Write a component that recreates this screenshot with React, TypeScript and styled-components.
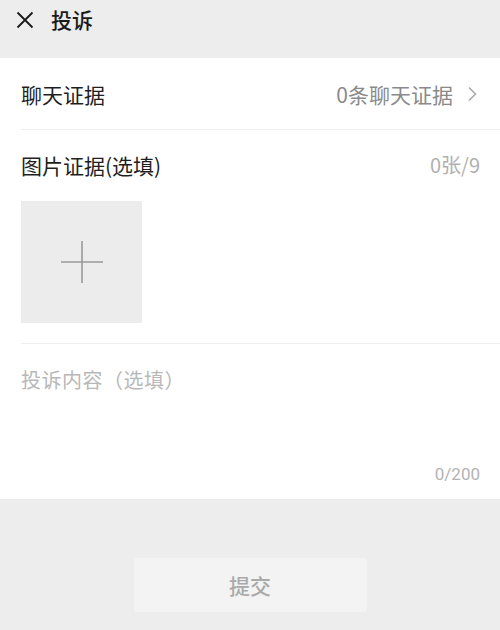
import React from "react";
import styled, { createGlobalStyle } from "styled-components";

const Global = createGlobalStyle`
  html, body { margin: 0; padding: 0; background: #ededed; }
  body { font-family: "Noto Sans CJK SC", "Noto Sans", sans-serif; }
  * { box-sizing: border-box; }
`;

const Page = styled.div`
  width: 500px;
  height: 630px;
  background: #ededed;
  display: flex;
  flex-direction: column;
`;

const Header = styled.div`
  height: 58px;
  display: flex;
  align-items: flex-start;
  padding: 9px 0 0 16px;
  gap: 17px;
`;

const Title = styled.div`
  font-size: 21px;
  font-weight: 500;
  color: #1a1a1a;
  line-height: 21px;
`;

const Panel = styled.div`
  background: #fff;
  display: flex;
  flex-direction: column;
  padding-left: 21px;
`;

const Row = styled.div<{ $h: number }>`
  height: ${(p) => p.$h}px;
  display: flex;
  align-items: center;
  justify-content: space-between;
  padding-right: 22px;
  border-bottom: 1px solid #efefef;
`;

const Label = styled.div`
  font-size: 21px;
  color: #1f1f1f;
`;

const Meta = styled.div<{ $color: string; $size: number }>`
  font-size: ${(p) => p.$size}px;
  color: ${(p) => p.$color};
  display: flex;
  align-items: center;
  gap: 14px;
`;

const PhotoBlock = styled.div`
  display: flex;
  flex-direction: column;
  border-bottom: 1px solid #efefef;
  padding-bottom: 20px;
`;

const PhotoHead = styled.div`
  height: 71px;
  display: flex;
  align-items: center;
  justify-content: space-between;
  padding-right: 20px;
  padding-bottom: 2px;
`;

const AddBox = styled.div`
  width: 121px;
  height: 122px;
  background: #ececec;
  display: flex;
  align-items: center;
  justify-content: center;
`;

const ContentBlock = styled.div`
  height: 155px;
  display: flex;
  flex-direction: column;
  justify-content: space-between;
  padding: 21px 20px 15px 0;
`;

const Placeholder = styled.div`
  font-size: 20px;
  color: #b8b8b8;
  letter-spacing: 0.5px;
`;

const Counter = styled.div`
  align-self: flex-end;
  font-size: 17px;
  color: #b3b3b3;
  font-family: "Roboto", "Noto Sans", sans-serif;
`;

const Footer = styled.div`
  flex: 1;
  display: flex;
  justify-content: center;
  padding-top: 59px;
`;

const Submit = styled.button`
  width: 233px;
  height: 54px;
  border: none;
  border-radius: 3px;
  background: #f3f3f3;
  color: #a9a9a9;
  font-size: 21px;
  font-weight: 500;
  font-family: "Noto Sans CJK SC", sans-serif;
`;

export default function App() {
  return (
    <Page>
      <Global />
      <Header>
        <svg width="18" height="18" viewBox="0 0 18 18" style={{ marginTop: 2 }}>
          <path d="M1.5 1.5 L16.5 16.5 M16.5 1.5 L1.5 16.5" stroke="#1a1a1a" strokeWidth="1.8" fill="none" />
        </svg>
        <Title>投诉</Title>
      </Header>
      <Panel>
        <Row $h={72}>
          <Label>聊天证据</Label>
          <Meta $color="#8a8a8a" $size={21}>
            <span>0条聊天证据</span>
            <svg width="11" height="16" viewBox="0 0 11 16">
              <path d="M2 1.5 L8.5 8 L2 14.5" stroke="#aaa" strokeWidth="1.6" fill="none" />
            </svg>
          </Meta>
        </Row>
        <PhotoBlock>
          <PhotoHead>
            <Label>图片证据(选填)</Label>
            <Meta $color="#b0b0b0" $size={20}>0张/9</Meta>
          </PhotoHead>
          <AddBox>
            <svg width="42" height="42" viewBox="0 0 42 42">
              <path d="M21 0 V42 M0 21 H42" stroke="#999" strokeWidth="1.6" />
            </svg>
          </AddBox>
        </PhotoBlock>
        <ContentBlock>
          <Placeholder>投诉内容（选填）</Placeholder>
          <Counter>0/200</Counter>
        </ContentBlock>
      </Panel>
      <Footer>
        <Submit>提交</Submit>
      </Footer>
    </Page>
  );
}
